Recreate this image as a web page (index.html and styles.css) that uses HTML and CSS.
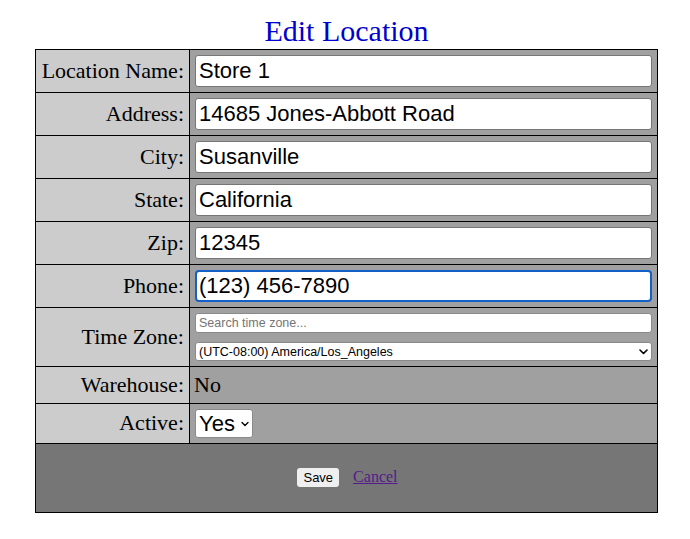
FILE: index.html
```html
<!DOCTYPE html>
<html>
<head>
<meta charset="utf-8">
<title>Edit Location</title>
<link rel="stylesheet" href="styles.css">
</head>
<body>
<div class="page">
  <h1 class="title">Edit Location</h1>
  <table class="form-table">
    <tr>
      <td class="label">Location Name:</td>
      <td class="value"><input class="text-input" type="text" value="Store 1"></td>
    </tr>
    <tr>
      <td class="label">Address:</td>
      <td class="value"><input class="text-input" type="text" value="14685 Jones-Abbott Road"></td>
    </tr>
    <tr>
      <td class="label">City:</td>
      <td class="value"><input class="text-input" type="text" value="Susanville"></td>
    </tr>
    <tr>
      <td class="label">State:</td>
      <td class="value"><input class="text-input" type="text" value="California"></td>
    </tr>
    <tr>
      <td class="label">Zip:</td>
      <td class="value"><input class="text-input" type="text" value="12345"></td>
    </tr>
    <tr>
      <td class="label">Phone:</td>
      <td class="value"><input class="text-input focused" type="text" value="(123) 456-7890"></td>
    </tr>
    <tr>
      <td class="label">Time Zone:</td>
      <td class="value">
        <div class="tz-stack">
          <input class="small-input" type="text" placeholder="Search time zone...">
          <span class="select-wrap">
            <select class="small-select">
              <option>(UTC-08:00) America/Los_Angeles</option>
            </select>
            <svg class="chev chev-small" width="9" height="6" viewBox="0 0 9 6"><path d="M1 1 L4.5 4.5 L8 1" fill="none" stroke="#000" stroke-width="1.6" stroke-linecap="round" stroke-linejoin="round"/></svg>
          </span>
        </div>
      </td>
    </tr>
    <tr>
      <td class="label label-short">Warehouse:</td>
      <td class="value value-text">No</td>
    </tr>
    <tr>
      <td class="label">Active:</td>
      <td class="value">
        <span class="select-wrap">
          <select class="yes-select">
            <option>Yes</option>
            <option>No</option>
          </select>
          <svg class="chev chev-yes" width="8" height="6" viewBox="0 0 8 6"><path d="M1 1.5 L4 4.5 L7 1.5" fill="none" stroke="#000" stroke-width="1.3" stroke-linecap="round" stroke-linejoin="round"/></svg>
        </span>
      </td>
    </tr>
    <tr>
      <td class="footer" colspan="2">
        <div class="actions">
          <button class="save-btn" type="button">Save</button>
          <a class="cancel-link" href="#">Cancel</a>
        </div>
      </td>
    </tr>
  </table>
</div>
</body>
</html>
```

FILE: styles.css
```css
html, body {
  margin: 0;
  padding: 0;
  background: #ffffff;
}

.page {
  width: 623px;
  margin-left: 35px;
  font-family: "Liberation Serif", "Times New Roman", serif;
}

.title {
  margin: 14px 0 1px;
  font-size: 30px;
  font-weight: normal;
  line-height: 34px;
  text-align: center;
  color: #0000cd;
}

.form-table {
  width: 623px;
  border-collapse: collapse;
  border: 1px solid #000;
}

.form-table td {
  border: 1px solid #000;
  padding: 5px;
  vertical-align: middle;
}

.form-table td.label {
  padding: 4px 5px 6px;
}

.label {
  width: 143px;
  background: #cccccc;
  text-align: right;
  font-size: 22px;
  line-height: 25px;
  color: #000;
  white-space: nowrap;
}

.form-table td.label-short {
  padding-top: 5px;
  padding-bottom: 6px;
}

.value {
  background: #a0a0a0;
}

.form-table td.value-text {
  font-size: 22px;
  line-height: 25px;
  padding: 5px 5px 6px 4px;
}

.text-input {
  display: block;
  box-sizing: border-box;
  width: 457px;
  height: 32px;
  margin: 0;
  padding: 1px 3px;
  border: 1px solid #767676;
  border-radius: 3px;
  background: #fff;
  font-family: "Liberation Sans", Arial, sans-serif;
  font-size: 22px;
  color: #000;
  outline: none;
}

.text-input.focused {
  border: 2px solid #1360c9;
  padding: 0 2px;
  border-radius: 4px;
}

.tz-stack {
  display: flex;
  flex-direction: column;
  gap: 9px;
}

.small-input {
  box-sizing: border-box;
  width: 457px;
  height: 20px;
  margin: 0;
  padding: 0 3px;
  border: 1px solid #8a8a8a;
  border-radius: 3px;
  background: #fff;
  font-family: "Liberation Sans", Arial, sans-serif;
  font-size: 12.5px;
  color: #000;
  outline: none;
}

.small-input::placeholder {
  color: #757575;
}

.select-wrap {
  position: relative;
  display: inline-block;
}

.small-select {
  -webkit-appearance: none;
  appearance: none;
  display: block;
  box-sizing: border-box;
  width: 457px;
  height: 19px;
  margin: 0;
  padding: 0 3px;
  border: 1px solid #8a8a8a;
  border-radius: 3px;
  background: #fff;
  font-family: "Liberation Sans", Arial, sans-serif;
  font-size: 12.5px;
  color: #000;
}

.yes-select {
  -webkit-appearance: none;
  appearance: none;
  display: block;
  box-sizing: border-box;
  width: 58px;
  height: 29px;
  margin: 0;
  padding: 0 3px;
  border: 1px solid #8a8a8a;
  border-radius: 3px;
  background: #fff;
  font-family: "Liberation Sans", Arial, sans-serif;
  font-size: 22px;
  color: #000;
}

.chev {
  position: absolute;
  pointer-events: none;
}

.chev-small {
  right: 4px;
  top: 7px;
}

.chev-yes {
  right: 4px;
  top: 12px;
}

.footer {
  background: #767676;
  height: 58px;
}

.form-table td.footer {
  padding: 4px 5px 6px;
}

.actions {
  display: flex;
  justify-content: center;
  align-items: center;
  gap: 14px;
  padding-left: 2px;
}

.save-btn {
  box-sizing: border-box;
  height: 19px;
  padding: 0 6px;
  margin: 0;
  border: none;
  border-radius: 3px;
  background: #efefef;
  font-family: "Liberation Sans", Arial, sans-serif;
  font-size: 13px;
  color: #000;
}

.cancel-link {
  font-family: "Liberation Serif", "Times New Roman", serif;
  font-size: 16px;
  color: #551a8b;
  text-decoration: underline;
}
```
